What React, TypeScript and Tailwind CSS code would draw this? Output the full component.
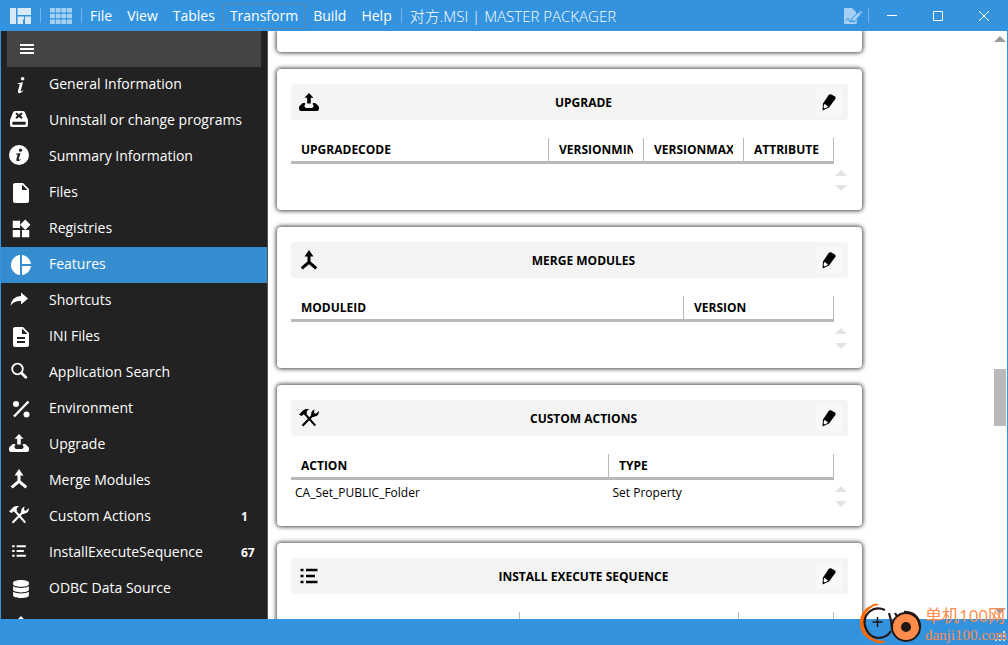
import React from "react";
import { FaDatabase } from "react-icons/fa";
import { MdDescription, MdInsertDriveFile, MdPieChart, MdWidgets } from "react-icons/md";

type IconProps = { className?: string };

function ItalicInfoIcon() {
  return (
    <svg viewBox="0 0 20 20" className="size-5" fill="currentColor" aria-hidden="true">
      <circle cx="11.6" cy="3.8" r="1.8" />
      <path d="M6.8 8.2 12 7.2 9.8 15.4q-.3 1.3.6 1l1.6-1.2.4.6q-2 2.4-4 2.4-2 0-1.5-2.2L8.7 9.6q.1-.7-.6-.7H6.7z" />
    </svg>
  );
}

function UninstallIcon() {
  return (
    <svg viewBox="0 0 18 16" className="h-4 w-[18px]" aria-hidden="true">
      <path
        d="M5 0h8q1.500 0 2 1.500L18 9v5q0 2-2 2H2q-2 0-2-2V9L3 1.500Q3.500 0 5 0zM3 10.700q-.7 0-.7.7v1.700q0 .7.7.7h12q.7 0 .7-.7v-1.700q0-.7-.7-.7z"
        fill="currentColor"
        fillRule="evenodd"
      />
      <path d="M6 2.300l6 4.800M12 2.300 6 7.100" stroke="#222" strokeWidth="2" />
    </svg>
  );
}

function InfoCircleIcon() {
  return (
    <svg viewBox="0 0 20 20" className="size-5" aria-hidden="true">
      <circle cx="10" cy="10" r="10" fill="currentColor" />
      <circle cx="11.500" cy="5.200" r="1.600" fill="#222" />
      <path d="M7 8.800l4.500-.8-1.700 6q-.2 1 .5.7l1.300-.8.3.6q-1.700 1.800-3.300 1.800-1.700 0-1.300-1.800l1.200-4.300q.1-.6-.5-.6h-1z" fill="#222" />
    </svg>
  );
}

function ShareIcon() {
  return (
    <svg viewBox="0 0 20 20" className="size-5" fill="currentColor" aria-hidden="true">
      <path d="M12 3.500 19 9.500 12 15.500v-3.500Q5 11.500 1.500 17 2.500 7.500 12 7z" />
    </svg>
  );
}

function SearchIcon() {
  return (
    <svg viewBox="0 0 20 20" className="size-5" fill="none" stroke="currentColor" aria-hidden="true">
      <circle cx="8.500" cy="8" r="5.300" strokeWidth="1.800" />
      <path d="M12.500 12l4.300 4.300" strokeWidth="2.800" strokeLinecap="round" />
    </svg>
  );
}

function PercentIcon() {
  return (
    <svg viewBox="0 0 20 20" className="size-5" fill="currentColor" aria-hidden="true">
      <path d="M3 17.500 17.500 2.500" stroke="currentColor" strokeWidth="2.400" />
      <circle cx="5" cy="5" r="3" />
      <circle cx="15.500" cy="15.500" r="3" />
    </svg>
  );
}

function UploadIcon() {
  return (
    <svg viewBox="0 0 20 20" className="size-5" fill="currentColor" aria-hidden="true">
      <path d="M10 1l4.500 4.700h-2.700v5.800H8.200V5.700H5.500z" />
      <path d="M3.800 11h2.400v1.200L5.200 14l1.500 2h6.600l1.500-2-1-1.800V11h2.400l3.300 3q.5.500.5 1.500v1.300q0 2.200-2 2.200H2q-2 0-2-2.200v-1.300q0-1 .5-1.500z" />
    </svg>
  );
}

function MergeIcon() {
  return (
    <svg viewBox="0 0 20 20" className="size-5" aria-hidden="true">
      <path d="M10 0l4.500 6.500h-9z" fill="currentColor" />
      <path d="M10 5v6q0 1.500-1.500 2.500L2.700 18.300M10 11q0 1.500 1.500 2.500l5.800 4.800" fill="none" stroke="currentColor" strokeWidth="3" />
    </svg>
  );
}

function ToolsIcon() {
  return (
    <svg viewBox="0 0 20 20" className="size-5" aria-hidden="true">
      <path d="M0 6.500 4.500 2Q7.500.300 10.500 1.600 7.500 2.300 7.500 4.300L8 5.800 6 7.500 4.800 6.200 2.500 8z" fill="currentColor" />
      <path d="M6.500 6.500 16.300 17.700" stroke="currentColor" strokeWidth="2" />
      <path d="M3.500 17.700 13.700 7.200" stroke="currentColor" strokeWidth="2.200" />
      <path d="M12.300 7.500Q11.500 3 15.500 1.500L15 5l2 .8L19.700 3Q20.500 7.800 15.800 8.400L13.500 9.200z" fill="currentColor" />
    </svg>
  );
}

function ListIcon({ className = "size-5" }: IconProps) {
  return (
    <svg viewBox="0 0 20 20" className={className} stroke="currentColor" strokeWidth="2.400" aria-hidden="true">
      <path d="M1.500 4h3M7 4h11.500M1.500 10h3M7 10h9M1.500 16h3M7 16h11.500" />
    </svg>
  );
}

function PencilIcon() {
  return (
    <svg viewBox="0 0 14 17" className="h-[17px] w-[14px]" aria-hidden="true">
      <path d="M6.500 1.200Q7.500 0 9 .3l3.500 1.900q1.500 1 1 2.600L7 13.500.5 16.500 1 9.500z" fill="currentColor" />
      <path d="M2 10.300q2-.3 2.400 1.200 1.600.1 1.500 1.300l-3 1.700L1.600 13.500z" fill="#f8f8f8" />
    </svg>
  );
}

const menuItems = ["File", "View", "Tables", "Transform", "Build", "Help"];

const navItems = [
  { label: "General Information", icon: <ItalicInfoIcon />, shifted: true },
  { label: "Uninstall or change programs", icon: <UninstallIcon /> },
  { label: "Summary Information", icon: <InfoCircleIcon /> },
  { label: "Files", icon: <MdInsertDriveFile className="size-6" />, shifted: true },
  { label: "Registries", icon: <MdWidgets className="size-[22px]" />, shifted: true },
  { label: "Features", icon: <MdPieChart className="size-6" />, shifted: true },
  { label: "Shortcuts", icon: <ShareIcon /> },
  { label: "INI Files", icon: <MdDescription className="size-6" />, shifted: true },
  { label: "Application Search", icon: <SearchIcon /> },
  { label: "Environment", icon: <PercentIcon />, shifted: true },
  { label: "Upgrade", icon: <UploadIcon /> },
  { label: "Merge Modules", icon: <MergeIcon /> },
  { label: "Custom Actions", icon: <ToolsIcon />, count: 1 },
  { label: "InstallExecuteSequence", icon: <ListIcon className="size-4" />, count: 67 },
  { label: "ODBC Data Source", icon: <FaDatabase className="size-[18px]" />, shifted: true },
  { label: "ODBC Drivers", icon: <UploadIcon />, shifted: true },
];

const cards = [
  {
    title: "UPGRADE",
    icon: <UploadIcon />,
    columns: [
      { name: "UPGRADECODE", width: "w-auto" },
      { name: "VERSIONMIN", width: "w-[95px]" },
      { name: "VERSIONMAX", width: "w-[100px]" },
      { name: "ATTRIBUTE", width: "w-[90px]" },
    ],
    rows: [],
  },
  {
    title: "MERGE MODULES",
    icon: <MergeIcon />,
    columns: [
      { name: "MODULEID", width: "w-auto" },
      { name: "VERSION", width: "w-[150px]" },
    ],
    rows: [],
  },
  {
    title: "CUSTOM ACTIONS",
    icon: <ToolsIcon />,
    columns: [
      { name: "ACTION", width: "w-auto" },
      { name: "TYPE", width: "w-[225px]" },
    ],
    rows: [["CA_Set_PUBLIC_Folder", "Set Property"]],
  },
  {
    title: "INSTALL EXECUTE SEQUENCE",
    icon: <ListIcon />,
    columns: [
      { name: "ACTION", width: "w-auto" },
      { name: "CONDITION", width: "w-[219px]" },
      { name: "SEQUENCE", width: "w-[95px]" },
    ],
    rows: [],
  },
];

function Separator() {
  return <span className="block h-[15px] w-px bg-[#73b3e8]" />;
}

function TitleBar() {
  return (
    <header className="flex h-[31px] shrink-0 items-center bg-[#3393df] text-white">
      <div className="flex items-center pl-[10px]">
        <button aria-label="Layout view">
          <svg viewBox="0 0 21 16" className="h-4 w-[21px]" fill="#d6e9f9" aria-hidden="true">
            <path d="M0 0h6v16H0zM7.500 0H21v7H7.500zM7.500 8.500H14v3H7.500zM7.500 8.500H13V16H7.500zM15 8.500h6V16h-6z" />
          </svg>
        </button>
        <div className="px-[9px]">
          <Separator />
        </div>
        <button aria-label="Table view">
          <svg viewBox="0 0 22 16" className="h-4 w-[22px]" aria-hidden="true">
            <path d="M0 2.300h22M0 8h22M0 13.700h22" stroke="#a5d0f3" strokeWidth="4.600" strokeDasharray="4.900 .8" />
          </svg>
        </button>
        <div className="pl-[9px]">
          <Separator />
        </div>
      </div>
      <nav className="flex items-center gap-px pl-px">
        {menuItems.map((item) => (
          <button
            key={item}
            className={`h-[26px] border px-[6px] text-sm leading-5 ${
              item === "Transform" ? "border-[#5b87ad]" : "border-transparent"
            }`}
          >
            {item}
          </button>
        ))}
      </nav>
      <div className="pl-[2px]">
        <Separator />
      </div>
      <h1 className="truncate pl-2 text-[15px] leading-5 font-light">对方.MSI | MASTER PACKAGER</h1>
      <div className="ml-auto flex items-center">
        <button aria-label="Sign package">
          <svg viewBox="0 0 18 16" className="h-4 w-[18px]" aria-hidden="true">
            <path d="M1 0h7l4 4v2L7 11v3h5v2H1q-1 0-1-1V1q0-1 1-1z" fill="#a5d0f3" />
            <path d="M12 11v4H6" stroke="#a5d0f3" strokeWidth="1.500" fill="none" />
            <path d="M8.500 10.500 14.500 4.500l2 2-6 6-2.500.5zM15.200 3.800l1-1 2 2-1 1z" fill="#a5d0f3" />
            <path d="M2 13q2-5 3-1t2.500 0" stroke="#3393df" fill="none" />
          </svg>
        </button>
        <div className="pr-[18px] pl-[6px]">
          <Separator />
        </div>
        <button aria-label="Minimize">
          <svg viewBox="0 0 10 10" className="size-[10px]" stroke="currentColor" aria-hidden="true">
            <path d="M0 4.500h10" />
          </svg>
        </button>
        <button aria-label="Maximize" className="px-9">
          <svg viewBox="0 0 10 10" className="size-[10px]" fill="none" stroke="currentColor" aria-hidden="true">
            <path d="M.5.500h9v9h-9z" />
          </svg>
        </button>
        <button aria-label="Close" className="pr-[19px]">
          <svg viewBox="0 0 10 10" className="size-[10px]" stroke="currentColor" aria-hidden="true">
            <path d="M0 0l10 10M10 0 0 10" />
          </svg>
        </button>
      </div>
    </header>
  );
}

function Sidebar() {
  return (
    <aside className="w-[267px] shrink-0 overflow-hidden border-r border-[#555] bg-[#222] text-white">
      <div className="mx-[6px] flex h-9 items-center bg-[#444] pl-[13px]">
        <button aria-label="Toggle menu">
          <svg viewBox="0 0 14 10" className="h-[10px] w-[14px]" fill="currentColor" aria-hidden="true">
            <path d="M0 0h14v2H0zM0 4h14v2H0zM0 8h14v2H0z" />
          </svg>
        </button>
      </div>
      <ul>
        {navItems.map((item) => (
          <li key={item.label}>
            <a
              href="#"
              aria-current={item.label === "Features" ? "page" : undefined}
              className={`flex h-9 items-center ${item.label === "Features" ? "bg-[#358dcf]" : ""}`}
            >
              <span className={`flex w-12 shrink-0 items-center ${item.shifted ? "pl-2" : "pb-1 pl-[6px]"}`}>
                <span className="flex w-6 items-center justify-center">{item.icon}</span>
              </span>
              <span className="flex-1 pb-[2px] text-sm leading-5 whitespace-nowrap">{item.label}</span>
              {item.count && (
                <span className="w-[26px] text-xs font-bold">{item.count}</span>
              )}
            </a>
          </li>
        ))}
      </ul>
    </aside>
  );
}

function ScrollArrows() {
  return (
    <div className="flex w-[14px] shrink-0 flex-col items-center gap-[9px] pt-8">
      <svg viewBox="0 0 12 6" className="h-[6px] w-3" fill="#e3e3e3" aria-hidden="true">
        <path d="M0 6 6 0l6 6z" />
      </svg>
      <svg viewBox="0 0 12 6" className="h-[6px] w-3" fill="#e3e3e3" aria-hidden="true">
        <path d="M0 0h12L6 6z" />
      </svg>
    </div>
  );
}

function Card({ card }: { card: (typeof cards)[number] }) {
  return (
    <section className="min-h-[141px] rounded bg-white px-[14px] pt-[15px] shadow-[0_0_4px_1px_#444]">
      <div className="flex h-9 items-center rounded bg-[#f4f4f4] pr-[6px] pl-2">
        {card.icon}
        <h2 className="flex-1 pt-[2px] pl-8 text-center text-xs font-bold">{card.title}</h2>
        <button aria-label={`Edit ${card.title}`} className="flex size-[26px] items-center justify-center bg-[#f8f8f8]">
          <PencilIcon />
        </button>
      </div>
      <div className="flex pt-[18px]">
        <table className="w-full min-w-0 flex-1 table-fixed border-collapse self-start text-left text-xs">
          <thead>
            <tr className="border-b-3 border-[#b9b9b9]">
              {card.columns.map((column) => (
                <th key={column.name} className={`h-6 border-r border-[#b9b9b9] px-[10px] pt-[2px] pb-0 font-bold ${column.width}`}>
                  <div className="overflow-hidden whitespace-nowrap">{column.name}</div>
                </th>
              ))}
            </tr>
          </thead>
          <tbody>
            {card.rows.map((row) => (
              <tr key={row[0]}>
                {row.map((cell) => (
                  <td key={cell} className="h-7 px-1 py-0">
                    {cell}
                  </td>
                ))}
              </tr>
            ))}
          </tbody>
        </table>
        <ScrollArrows />
      </div>
    </section>
  );
}

function Watermark() {
  return (
    <div className="absolute right-px bottom-0 flex items-center gap-[2px] text-[#ff8c4a]">
      <svg viewBox="0 0 64 44" className="h-11 w-16" fill="none" aria-hidden="true">
        <path d="M20 4Q17 1 13 4 1 9 1 22t13 18q4 3 10 2l3-2Q17 40 12 36 4 31 5 20 6 9 15 5z" fill="#ff6a00" />
        <path d="M26 9Q17 5 10 11 4 17 6 25q3 11 13 12 9 0 13-7" stroke="#231815" strokeWidth="2.200" />
        <path d="M30 12q3 9 3 17M36 12l3 5" stroke="#231815" strokeWidth="2.200" />
        <path d="M18.500 16v10M13.500 21h10" stroke="#231815" strokeWidth="1.500" />
        <circle cx="47" cy="26" r="14" fill="#ff8c4a" stroke="#231815" strokeWidth="2" />
        <path d="M45 11q14 0 16 14" stroke="#231815" strokeWidth="2.500" />
        <circle cx="47" cy="26" r="5" fill="#231815" />
      </svg>
      <div className="pt-[3px] whitespace-nowrap">
        <p className="text-[17px] leading-5">单机100网</p>
        <p className="font-['Liberation_Serif',serif] text-[15px] leading-[18px]">danji100.com</p>
      </div>
    </div>
  );
}

export default function App() {
  return (
    <div className="relative flex h-screen flex-col overflow-hidden bg-white font-['Open_Sans','Noto_Sans_CJK_SC',sans-serif] text-black">
      <TitleBar />
      <div className="flex min-h-0 flex-1 border-x border-[#3393df]">
        <Sidebar />
        <main className="min-w-0 flex-1 overflow-hidden px-[9px]">
          <div className="flex max-w-[585px] flex-col gap-[17px]">
            <div className="h-[21px] shrink-0 rounded-b bg-white shadow-[0_0_4px_1px_#444]" />
            {cards.map((card) => (
              <Card key={card.title} card={card} />
            ))}
          </div>
        </main>
        <div className="flex w-[14px] shrink-0 flex-col items-center py-[5px]">
          <svg viewBox="0 0 12 6" className="h-[6px] w-3" fill="#999" aria-hidden="true">
            <path d="M0 6 6 0l6 6z" />
          </svg>
          <div className="flex w-3 flex-1 flex-col">
            <span className="grow-[327]" />
            <span className="grow-[57] bg-[#b9b9b9]" />
            <span className="grow-[182]" />
          </div>
          <svg viewBox="0 0 12 6" className="h-[6px] w-3" fill="#999" aria-hidden="true">
            <path d="M0 0h12L6 6z" />
          </svg>
        </div>
      </div>
      <footer className="flex h-[26px] shrink-0 items-end justify-end bg-[#3393df] p-[2px]">
        <svg viewBox="0 0 12 12" className="size-3" fill="#cfe5f7" aria-hidden="true">
          <path d="M9 0h2v2H9zM5 4h2v2H5zM9 4h2v2H9zM1 8h2v2H1zM5 8h2v2H5zM9 8h2v2H9z" />
        </svg>
      </footer>
      <Watermark />
    </div>
  );
}
